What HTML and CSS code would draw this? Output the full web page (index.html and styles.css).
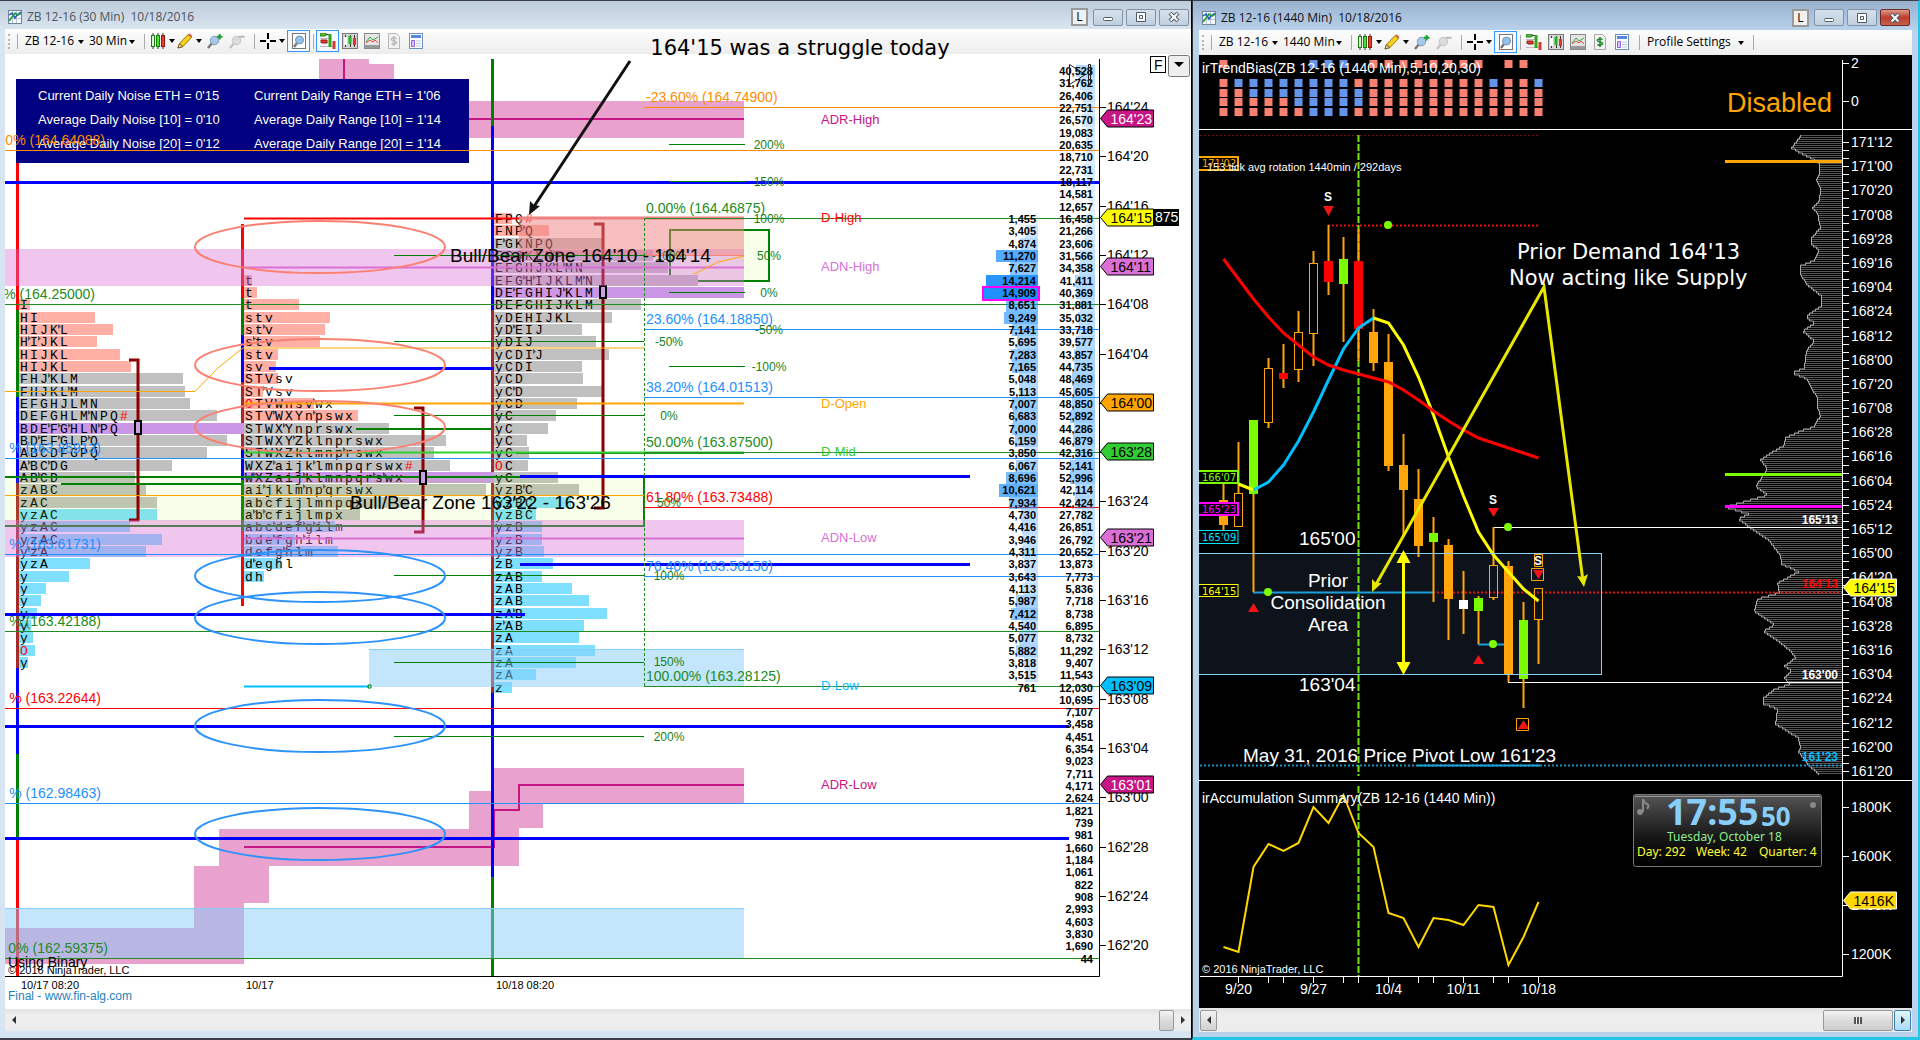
FILE: index.html
```html
<!DOCTYPE html>
<html lang="en">
<head>
  <meta charset="UTF-8">
  <meta name="viewport" content="width=device-width, initial-scale=1.0">
  <title>ZB 12-16 Charts</title>
  <link rel="stylesheet" href="styles.css">
</head>
<body>

  <!-- Shared icons -->
  <svg class="defs" width="0" height="0" aria-hidden="true">
    <symbol id="i-chart" viewBox="0 0 14 14">
      <rect x=".5" y=".5" width="13" height="13" fill="#f4f8fb" stroke="#71869a"/>
      <path d="M1 4.5h12M1 8.5h12M4.5 1v12M8.5 1v12" stroke="#b9c6d2"/>
      <path d="M1 5l3-2 3 5 2-3 4-3" fill="none" stroke="#2a53d0" stroke-width="1.5"/>
      <path d="M1 11l3-4 3-4 3 2 3-2" fill="none" stroke="#1c9d2c" stroke-width="1.5"/>
    </symbol>
    <symbol id="i-candles" viewBox="0 0 16 16">
      <path d="M3 0v16M8 0v16M13 0v16" stroke="#333"/>
      <rect x="1.5" y="2.500" width="3" height="11" fill="#d8f5cf" stroke="#1b7a12"/>
      <rect x="6.500" y="2.500" width="3" height="11" fill="#4fe02f" stroke="#1b7a12"/>
      <rect x="11.500" y="2.500" width="3" height="11" fill="#f03a2a" stroke="#8e1b12"/>
    </symbol>
    <symbol id="i-pencil" viewBox="0 0 16 16">
      <path d="M1 15l1.500-4.500L11 1.500l3.500 3L6 13.500z" fill="#f7d21c" stroke="#9b7a0a"/>
      <path d="M1 15l1.500-4.500 3.500 3z" fill="#f0d9a8" stroke="#6f5a20"/>
      <path d="M11 1.500l3.500 3 .8-1.500-2.600-2.500z" fill="#d9534a"/>
    </symbol>
    <symbol id="i-zoomin" viewBox="0 0 17 17">
      <path d="M1 16l5-6" stroke="#777" stroke-width="2.500"/>
      <circle cx="8" cy="8" r="4.500" fill="#a5c9ea" stroke="#8297ab"/>
      <path d="M13.500 1v6M10.500 4h6" stroke="#14a02c" stroke-width="2"/>
    </symbol>
    <symbol id="i-zoomout" viewBox="0 0 17 17">
      <path d="M1 16l5-6" stroke="#c3c3c3" stroke-width="2.500"/>
      <circle cx="8" cy="8" r="4.500" fill="#dcdcdc" stroke="#c0c0c0"/>
      <path d="M10.500 4h6" stroke="#b5b5b5" stroke-width="2"/>
    </symbol>
    <symbol id="i-cross" viewBox="0 0 16 16">
      <path d="M8 0v6M8 10v6M0 8h6M10 8h6" stroke="#000" stroke-width="2"/>
    </symbol>
    <symbol id="i-lens" viewBox="0 0 16 16">
      <rect x="1.500" y=".5" width="13" height="15" fill="#fff" stroke="#777"/>
      <path d="M3 14l3-4" stroke="#777" stroke-width="2.500"/>
      <circle cx="8.500" cy="7" r="4" fill="#92c1ec" stroke="#7893ab"/>
    </symbol>
    <symbol id="i-trader" viewBox="0 0 16 16">
      <path d="M0 5.500h10M0 9.500h8M0 13.500h15" stroke="#bbb"/>
      <path d="M0 0h5l2 1.500-2 1.500H0z" fill="#4fc831" stroke="#237a17"/>
      <path d="M1 7h6v3H2L1 8.500z" fill="#e8392b" stroke="#8e1b12"/>
      <path d="M6 1.500h3" stroke="#333"/>
      <path d="M10 1v13" stroke="#2da81b" stroke-width="3"/>
      <path d="M14 8v8" stroke="#d93a2c" stroke-width="3"/>
    </symbol>
    <symbol id="i-bars" viewBox="0 0 16 16">
      <rect x=".5" y=".5" width="15" height="15" fill="#d5d5d5" stroke="#777"/>
      <path d="M3.500 2v12M8.500 2v12M12.500 2v12" stroke="#333"/>
      <path d="M3.500 4v8" stroke="#fff" stroke-width="3"/>
      <path d="M8 3v8" stroke="#24b324" stroke-width="3"/>
      <path d="M12.500 5v7" stroke="#e03428" stroke-width="3"/>
    </symbol>
    <symbol id="i-lines" viewBox="0 0 16 16">
      <rect x=".5" y=".5" width="15" height="15" fill="#e4e4e4" stroke="#888"/>
      <path d="M1 12h14v3H1z" fill="#9a9a9a"/>
      <path d="M2 9l4-5 3 3 5-3" fill="none" stroke="#35a94b"/>
      <path d="M2 10l4-3 3 2 2-2 3 3" fill="none" stroke="#e0483c"/>
    </symbol>
    <symbol id="i-account" viewBox="0 0 14 16">
      <path d="M1.500.5h8l3 3v12h-11z" fill="#f2f2f2" stroke="#aaa"/>
      <path d="M9.500 5.500Q7 4 5 5.500T7 8t2 2.500-4.500 0M7 3v10" fill="none" stroke="currentColor" stroke-width="1.500"/>
    </symbol>
    <symbol id="i-panel" viewBox="0 0 14 16">
      <rect x=".5" y=".5" width="13" height="15" fill="#fff" stroke="#6f8fbd"/>
      <path d="M2 2h10v3H2z" fill="#4f8ae0"/>
      <path d="M2.500 7.500h3v6h-3z" fill="#d9c8ff" stroke="#8d5ce0"/>
      <path d="M7 8h5M7 10.500h5M7 13h5" stroke="#b9c9de"/>
    </symbol>
    <symbol id="i-min" viewBox="0 0 12 10"><rect x="1.500" y="5.500" width="9" height="3" rx="1" fill="#fff" stroke="#4f5a68"/></symbol>
    <symbol id="i-max" viewBox="0 0 12 10"><path d="M1.500.5h9v9h-9z" fill="#fff" stroke="#4f5a68"/><path d="M4.500 3.500h3v3h-3z" fill="none" stroke="#4f5a68"/></symbol>
    <symbol id="i-close" viewBox="0 0 12 10"><path d="M2 1l8 8M10 1l-8 8" stroke="#4f5a68" stroke-width="4"/><path d="M2.500 1.500l7 7M9.500 1.500l-7 7" stroke="#fff" stroke-width="2"/></symbol>
  </svg>

  <main class="desk">

    <!-- 30 minute market profile -->
    <section class="window profile">
      <header class="titlebar">
        <svg class="app-icon"><use href="#i-chart"/></svg>
        <h1>ZB 12-16 (30 Min)&nbsp; 10/18/2016</h1>
        <button class="link-btn">L</button>
        <button class="win-btn" aria-label="Minimize"><svg><use href="#i-min"/></svg></button>
        <button class="win-btn" aria-label="Restore"><svg><use href="#i-max"/></svg></button>
        <button class="win-btn" aria-label="Close"><svg><use href="#i-close"/></svg></button>
      </header>
      <nav class="toolbar">
        <span class="grip"></span><span class="sep"></span>
        <span class="combo symbol"><select aria-label="Instrument"><option>ZB 12-16</option></select></span>
        <span class="combo interval"><select aria-label="Interval"><option>30 Min</option></select></span>
        <span class="sep"></span>
        <button class="tool split" aria-label="Chart style"><svg><use href="#i-candles"/></svg></button>
        <button class="tool split" aria-label="Draw"><svg><use href="#i-pencil"/></svg></button>
        <button class="tool" aria-label="Zoom in"><svg><use href="#i-zoomin"/></svg></button>
        <button class="tool" aria-label="Zoom out"><svg><use href="#i-zoomout"/></svg></button>
        <span class="sep"></span>
        <button class="tool split" aria-label="Crosshair"><svg><use href="#i-cross"/></svg></button>
        <button class="tool on" aria-label="Data box"><svg><use href="#i-lens"/></svg></button>
        <span class="sep tight"></span>
        <button class="tool on" aria-label="Chart trader"><svg><use href="#i-trader"/></svg></button>
        <button class="tool" aria-label="Data series"><svg><use href="#i-bars"/></svg></button>
        <button class="tool" aria-label="Indicators"><svg><use href="#i-lines"/></svg></button>
        <button class="tool off" aria-label="Strategies"><svg><use href="#i-account"/></svg></button>
        <button class="tool" aria-label="Properties"><svg><use href="#i-panel"/></svg></button>
      </nav>
      <p class="annotation">164'15 was a struggle today</p>

      <svg class="chart" viewBox="5 54 1186 955" preserveAspectRatio="xMinYMin meet">
        <!-- average daily range bands -->
        <g class="adr">
          <path d="M319 59h50v5h25v74h-50v-37h-25z"/>
          <path d="M394 101h350v37H394z"/>
          <path d="M5 928H194V866H219V829H469V791H494V768H744V804H543V828H519V866H269V903H244V964H5z"/>
        </g>
        <path class="adr-line" d="M344 59v60h400M244 847H494V810H519V785H744"/>
        <g id="session-lines"></g>

        <rect x="16" y="79" width="453" height="84" fill="#000080"/>
        <g class="info">
          <text x="38" y="100">Current Daily Noise ETH = 0'15</text>
          <text x="38" y="124">Average Daily Noise [10] = 0'10</text>
          <text x="38" y="148">Average Daily Noise [20] = 0'12</text>
          <text x="254" y="100">Current Daily Range ETH = 1'06</text>
          <text x="254" y="124">Average Daily Range [10] = 1'14</text>
          <text x="254" y="148">Average Daily Range [20] = 1'14</text>
        </g>

        <path class="zone" d="M670 230H769V281H670z"/>
        <g id="profiles"></g>
        <path class="zone" d="M0 477H644V526H0z"/>

        <g class="bracket">
          <path d="M129 360h9v160h-9M414 408h9v124h-9M594 224h9v284h-9"/>
          <path class="poc" d="M135 421h6v13h-6zM420 471h6v13h-6zM600 286h6v12h-6z"/>
        </g>

        <!-- noise, supply and demand bands -->
        <path d="M5 249H744V286H5zM5 520H744V557H5z" fill="#da70d6" fill-opacity=".4"/>
        <path d="M519 217H744V255H519z" fill="#f08080" fill-opacity=".5"/>
        <path d="M519 218H744" stroke="#f08080" stroke-width="3"/>
        <path d="M369 649H744V687H369zM5 908H744V958H5z" fill="#87cefa" fill-opacity=".5"/>
        <path d="M369 649.500H744M5 908.500H744" stroke="#87cefa"/>

        <g id="levels"></g>
        <path d="M5 391.500H195L219 367 243 348H644M694 274L718 262 744 256" fill="none" stroke="#ffa500"/>
        <path d="M644.500 218V686" stroke="#228b22" stroke-dasharray="3 2"/>
        <path d="M368 685h3v3h-3z" fill="none" stroke="#008000"/>

        <g fill="none" stroke="#fa8072" stroke-width="2">
          <ellipse cx="320" cy="247" rx="125" ry="26"/>
          <ellipse cx="320" cy="365" rx="125" ry="26"/>
          <ellipse cx="320" cy="427" rx="125" ry="26"/>
        </g>
        <g fill="none" stroke="#2d93fb" stroke-width="2">
          <ellipse cx="320" cy="576" rx="125" ry="26"/>
          <ellipse cx="320" cy="618" rx="125" ry="26"/>
          <ellipse cx="320" cy="726" rx="125" ry="26"/>
          <ellipse cx="320" cy="834" rx="125" ry="26"/>
        </g>

        <g id="volume"></g>
        <g id="labels"></g>

        <text class="zone-name" x="450" y="262">Bull/Bear Zone 164'10 - 164'14</text>
        <text class="zone-name" x="350" y="509">Bull/Bear Zone 163'22 - 163'26</text>
        <path d="M630 61L531 211" stroke="#111" stroke-width="3"/>
        <path d="M529 215l1-14 4 4 6 1z" fill="#111"/>

        <path d="M1069.500 64.500v20l16-10zM1088.500 64.500v20h2v-20z" fill="none" stroke="#222"/>
        <path class="axis" d="M1099.500 59V976.500H5"/>
        <g id="price-axis"></g>

        <text class="t14" x="8" y="967">Using Binary</text>
        <text class="t11" x="8" y="974">© 2016 NinjaTrader, LLC</text>
        <text class="t11" x="21" y="989">10/17 08:20</text>
        <text class="t11" x="246" y="989">10/17</text>
        <text class="t11" x="496" y="989">10/18 08:20</text>
        <text class="t12" x="8" y="1000" fill="#1e82be">Final - www.fin-alg.com</text>

        <rect x="1150.500" y="56.500" width="15" height="16" fill="#fff" stroke="#000"/>
        <text class="t14" x="1154" y="70">F</text>
        <rect x="1168.500" y="55.500" width="21" height="21" rx="2" fill="#eee" stroke="#777"/>
        <path d="M1174 62h10l-5 5z"/>
      </svg>

      <div class="scrollbar">
        <button class="arrow prev" aria-label="Scroll left"></button>
        <span class="thumb"></span>
        <button class="arrow next" aria-label="Scroll right"></button>
      </div>
    </section>

    <!-- Daily chart -->
    <section class="window daily">
      <header class="titlebar">
        <svg class="app-icon"><use href="#i-chart"/></svg>
        <h1>ZB 12-16 (1440 Min)&nbsp; 10/18/2016</h1>
        <button class="link-btn">L</button>
        <button class="win-btn" aria-label="Minimize"><svg><use href="#i-min"/></svg></button>
        <button class="win-btn" aria-label="Restore"><svg><use href="#i-max"/></svg></button>
        <button class="win-btn close" aria-label="Close"><svg><use href="#i-close"/></svg></button>
      </header>
      <nav class="toolbar">
        <span class="grip"></span><span class="sep"></span>
        <span class="combo symbol"><select aria-label="Instrument"><option>ZB 12-16</option></select></span>
        <span class="combo interval"><select aria-label="Interval"><option>1440 Min</option></select></span>
        <span class="sep"></span>
        <button class="tool split" aria-label="Chart style"><svg><use href="#i-candles"/></svg></button>
        <button class="tool split" aria-label="Draw"><svg><use href="#i-pencil"/></svg></button>
        <button class="tool" aria-label="Zoom in"><svg><use href="#i-zoomin"/></svg></button>
        <button class="tool" aria-label="Zoom out"><svg><use href="#i-zoomout"/></svg></button>
        <span class="sep"></span>
        <button class="tool split" aria-label="Crosshair"><svg><use href="#i-cross"/></svg></button>
        <button class="tool on" aria-label="Data box"><svg><use href="#i-lens"/></svg></button>
        <span class="sep tight"></span>
        <button class="tool" aria-label="Chart trader"><svg><use href="#i-trader"/></svg></button>
        <button class="tool" aria-label="Data series"><svg><use href="#i-bars"/></svg></button>
        <button class="tool" aria-label="Indicators"><svg><use href="#i-lines"/></svg></button>
        <button class="tool" aria-label="Strategies"><svg><use href="#i-account"/></svg></button>
        <button class="tool" aria-label="Properties"><svg><use href="#i-panel"/></svg></button>
        <span class="sep"></span>
        <span class="combo settings"><select aria-label="Profile settings"><option>Profile Settings</option></select></span>
        <span class="sep"></span>
      </nav>

      <svg class="chart" viewBox="1199 55 713 953" preserveAspectRatio="xMinYMin meet">
        <defs>
          <linearGradient id="clock-bg" x2="0" y2="1">
            <stop offset="0" stop-color="#555"/><stop offset=".6" stop-color="#161616"/><stop offset="1" stop-color="#000"/>
          </linearGradient>
        </defs>
        <g id="bias"></g>
        <text class="t14" x="1202" y="73">irTrendBias(ZB 12-16 (1440 Min),5,10,20,30)</text>
        <text class="disabled" x="1727" y="112">Disabled</text>

        <rect x="1196" y="553.500" width="405.500" height="121" fill="#0e131b"/>
        <g id="vprofile"></g>
        <path d="M1725 161.500H1842" stroke="#ffa500" stroke-width="3"/>
        <path d="M1725 474.500H1842" stroke="#7cfc00" stroke-width="3"/>
        <path d="M1725 506.500H1842" stroke="#f0f" stroke-width="3"/>

        <path d="M1200 135.500H1538" stroke="#801010" stroke-dasharray="2 2"/>
        <path d="M1328 225.500H1538M1433 592.500H1842" stroke="#e01010" stroke-width="2" stroke-dasharray="2 2"/>
        <path d="M1200 765.500H1842" stroke="#1c8fc0" stroke-width="2" stroke-dasharray="2 2"/>
        <path d="M1253 592.500H1433M1478 644.500H1508M1417 765.500H1540" stroke="#1aa0dc" stroke-width="2"/>
        <path d="M1493 527.500H1842M1508 682.500H1842" stroke="#fff"/>
        <path d="M1358.500 135V776M1358.500 786V976" stroke="#74e80c" stroke-width="2" stroke-dasharray="7 2"/>
        <g id="candles"></g>
        <g id="averages"></g>
        <rect x="1196" y="553.500" width="405.500" height="121" fill="none" stroke="#87cefa"/>

        <g fill="#7cfc00">
          <circle cx="1388" cy="225" r="4"/><circle cx="1268" cy="592" r="4"/>
          <circle cx="1508" cy="527" r="4"/><circle cx="1493" cy="644" r="4"/>
        </g>
        <path fill="#f01418" d="M1323 206h11l-5.500 10zM1488 508h11l-5.500 9zM1533 570h11l-5.500 9zM1248 612h11l-5.500-9zM1473 664h11l-5.500-9zM1518 729h11l-5.500-9z"/>
        <path fill="none" stroke="#ffa500" d="M1531.500 568.500h12v12h-12zM1534.500 554.500h8v12h-8zM1516.500 718.500h12v12h-12z"/>
        <g class="signal">
          <text x="1328" y="201">S</text><text x="1493" y="504">S</text><text x="1538" y="565">S</text>
        </g>

        <g fill="none" stroke="#e6e600" stroke-width="3">
          <path d="M1374 588L1544 287l39 294"/>
          <path d="M1403.500 556V670" stroke="#ff0" />
        </g>
        <path d="M1372 592l0-13 4 4 6 0zM1584 587l-7-11 6 1 5-3z" fill="#e6e600"/>
        <path d="M1403.500 550l7 13h-14zM1403.500 675l7-13h-14z" fill="#ff0"/>

        <g class="remark">
          <text x="1299" y="545">165'00</text>
          <text x="1299" y="691">163'04</text>
          <text class="mid" x="1328" y="587">Prior</text>
          <text class="mid" x="1328" y="609">Consolidation</text>
          <text class="mid" x="1328" y="631">Area</text>
          <text x="1243" y="762">May 31, 2016 Price Pivot Low 161'23</text>
        </g>
        <text class="note" x="1517" y="259">Prior Demand 164'13</text>
        <text class="note" x="1509" y="285">Now acting like Supply</text>
        <g id="marks"></g>
        <text class="t11" x="1207" y="171">153 tick avg rotation 1440min / 292days</text>

        <path class="axis" d="M1199 129.500H1912M1199 780.500H1912M1842.500 60V976.500H1200"/>
        <g id="daily-axis"></g>
        <text class="t14" x="1202" y="803">irAccumulation Summary(ZB 12-16 (1440 Min))</text>
        <text class="t11" x="1202" y="973">© 2016 NinjaTrader, LLC</text>

        <!-- clock -->
        <rect x="1633.500" y="794.500" width="188" height="72" rx="2" fill="url(#clock-bg)" stroke="#777"/>
        <path d="M1635 796.500h185" stroke="#999"/>
        <ellipse cx="1640" cy="812" rx="3" ry="3" fill="#888"/>
        <path d="M1643 812V799q1 4 4 5t0 5" fill="none" stroke="#888" stroke-width="2"/>
        <circle cx="1813" cy="805" r="3" fill="#888"/>
        <g class="clock">
          <text class="hm" x="1666" y="825">17:55</text>
          <text class="ss" x="1761" y="826">50</text>
          <text class="date" x="1667" y="841">Tuesday, October 18</text>
          <text x="1637" y="856">Day: 292</text>
          <text x="1696" y="856">Week: 42</text>
          <text x="1759" y="856">Quarter: 4</text>
        </g>
      </svg>

      <div class="scrollbar">
        <button class="arrow prev" aria-label="Scroll left"></button>
        <span class="thumb"></span>
        <button class="arrow next" aria-label="Scroll right"></button>
      </div>
    </section>
  </main>

  <script src="charts.js"></script>
</body>
</html>
```
FILE: styles.css
```css
* {
  box-sizing: border-box;
}

body {
  margin: 0;
  background: #3b3f4a;
  font-family: "Open Sans", "Noto Sans", sans-serif;
  font-size: 12px;
}

.defs {
  position: absolute;
}

.desk {
  display: grid;
  grid-template-columns: 1192fr 728fr;
  grid-template-rows: 100%;
  height: 100vh;
  overflow: hidden;
}

/* Windows */
.window {
  position: relative;
  display: flex;
  flex-direction: column;
  min-width: 0;
  min-height: 0;
  border-top: 1px solid #3b3f4a;
}

.profile {
  padding-left: 5px;
  padding-bottom: 7px;
  background: #d7e4f2;
  border-right: 1px solid #000;
  border-bottom: 2px solid #3b3f4a;
}

.daily {
  padding: 0 6px 5px 6px;
  background: #b9d1ea;
  border-left: 1px solid #333;
  border-right: 2px solid #25c5e8;
  border-bottom: 3px solid #25c5e8;
}

.titlebar {
  display: flex;
  align-items: center;
  flex: none;
  height: 28px;
  gap: 3px;
  padding: 4px 2px 0 8px;
  margin-left: -5px;
  background: linear-gradient(#becbd8, #d9e5f1);
  color: #4a5560;
}

.daily .titlebar {
  height: 29px;
  margin: 0 -6px;
  padding-right: 8px;
  padding-left: 9px;
  background: linear-gradient(#98b2cf, #b9d1ea);
  color: #111;
}

.titlebar h1 {
  flex: 1;
  margin: 0 0 0 2px;
  font-size: 12px;
  line-height: 18px;
  font-weight: normal;
}

.app-icon {
  width: 14px;
  height: 14px;
}

.link-btn {
  width: 17px;
  height: 18px;
  margin-right: 2px;
  padding: 0;
  border: 2px solid #999;
  background: #f1f1f1;
  font: 12px/12px "Open Sans", sans-serif;
}

.win-btn {
  display: flex;
  align-items: center;
  justify-content: center;
  width: 30px;
  height: 17px;
  padding: 0;
  border: 1px solid #8292a5;
  border-radius: 2px;
  background: linear-gradient(#d5e0eb, #c0cfdf);
}

.win-btn svg {
  width: 12px;
  height: 10px;
}

.win-btn.close {
  background: linear-gradient(#dd9a8d, #bc3d2a 50%, #c5604d);
  border-color: #6b2a24;
}

/* Toolbar */
.toolbar {
  display: flex;
  align-items: center;
  flex: none;
  height: 25px;
  padding-bottom: 1px;
  background: linear-gradient(#fdfdfd, #ededed);
}

.grip {
  width: 3px;
  height: 15px;
  margin-left: 3px;
  border-left: 2px dotted #b5b5b5;
}

.sep {
  width: 1px;
  height: 15px;
  margin: 0 5px 0 6px;
  background: #aaa;
}

.sep.tight {
  margin: 0 2px 0 3px;
}

.combo {
  position: relative;
}

.combo::after {
  content: "";
  position: absolute;
  right: 3px;
  top: 8px;
  border: 3px solid transparent;
  border-top: 4px solid #000;
  border-bottom: 0;
}

.combo select {
  width: 100%;
  padding: 0 0 0 2px;
  border: 0;
  appearance: none;
  background: none;
  font: 12px/18px "Open Sans", sans-serif;
  color: #000;
}

.symbol {
  width: 64px;
}

.interval {
  width: 51px;
}

.daily .interval {
  width: 64px;
}

.settings {
  width: 102px;
}

.tool {
  display: flex;
  align-items: center;
  justify-content: center;
  width: 22px;
  height: 22px;
  padding: 0;
  border: 0;
  background: none;
  color: #1c8a2a;
}

.tool svg {
  width: 16px;
  height: 16px;
}

.tool.split {
  width: 27px;
  justify-content: flex-start;
  gap: 3px;
}

.tool.split::after {
  content: "";
  border: 3px solid transparent;
  border-top: 4px solid #000;
  border-bottom: 0;
}

.tool.on {
  width: 23px;
  border: 1px solid #3399ff;
  background: #f5f9fd;
}

.tool.off {
  color: #aaa;
  opacity: .8;
}

/* Charts */
.chart {
  flex: 1;
  width: 100%;
  min-height: 0;
  background: #fff;
  font-family: "Liberation Sans", Arial, sans-serif;
}

.daily .chart {
  background: #000;
  fill: #fff;
}

.axis {
  fill: none;
  stroke: #000;
}

.daily .axis {
  stroke: #fff;
}

.t11 { font-size: 11px; }
.t12 { font-size: 12px; }
.t13 { font-size: 13px; }
.t14 { font-size: 14px; }

.end { text-anchor: end; }
.mid { text-anchor: middle; }

.adr {
  fill: #c71585;
  fill-opacity: .4;
}

.adr-line {
  fill: none;
  stroke: #c71585;
  stroke-width: 2;
}

.info {
  fill: #fffff0;
  font-size: 13px;
}

.zone {
  fill: #adff2f;
  fill-opacity: .1;
  stroke: #008000;
  stroke-width: 2;
}

.bracket {
  fill: none;
  stroke: #8b0000;
  stroke-width: 3;
}

.bracket .poc {
  stroke: #000;
  stroke-width: 2;
  fill: #c9a0e0;
}

.tpo {
  font: 13px "Liberation Mono", "Courier New", monospace;
}

.tpo .red {
  fill: #f00;
}

.zone-name,
.remark {
  font-size: 19px;
}

.note,
.annotation {
  font: 21px/26px "DejaVu Sans", sans-serif;
}

/* callout pinned over the toolbar edge */
.annotation {
  position: absolute;
  left: 54.6%;
  top: 34px;
  margin: 0;
  white-space: nowrap;
}

.vol {
  font-size: 11px;
  font-weight: bold;
  text-anchor: end;
}

.disabled {
  font-size: 27px;
  fill: #ffa500;
}

.signal {
  font-size: 12px;
  font-weight: bold;
  text-anchor: middle;
}

.mark {
  font: 11px "DejaVu Sans Condensed", sans-serif;
}

.level {
  font-size: 12px;
  font-weight: bold;
  text-anchor: end;
}

.clock {
  font: 12px "Noto Sans", sans-serif;
  fill: #ffff33;
}

.clock .hm,
.clock .ss {
  font-weight: bold;
  fill: #87cefa;
}

.clock .hm { font-size: 36px; }
.clock .ss { font-size: 26px; }
.clock .date { fill: #90ee90; }

/* Scrollbars */
.scrollbar {
  display: flex;
  align-items: center;
  flex: none;
  height: 22px;
  background: linear-gradient(#e3e3e3, #eee 30%, #ececec);
}

.scrollbar .arrow {
  display: flex;
  align-items: center;
  justify-content: center;
  width: 17px;
  height: 21px;
  padding: 0;
  border: 0;
  background: none;
}

.arrow::before {
  content: "";
  border: 4px solid transparent;
}

.prev::before {
  border-right-color: #333;
  border-left: 0;
}

.next::before {
  border-left-color: #333;
  border-right: 0;
}

.thumb {
  width: 15px;
  height: 21px;
  margin-left: auto;
  border: 1px solid #999;
  border-radius: 2px;
  background: linear-gradient(#f3f3f3, #dcdcdc 50%, #cdcdcd);
}

.daily .scrollbar {
  height: 24px;
  padding: 0 1px;
}

.daily .arrow {
  border: 1px solid #999;
  border-radius: 2px;
  background: linear-gradient(#f3f3f3, #d0d0d0);
}

.daily .next {
  border-color: #3c7fb1;
  background: linear-gradient(#e5f4fc, #a9dbf5);
}

.daily .thumb {
  display: flex;
  align-items: center;
  justify-content: center;
  width: 70px;
  margin-right: 1px;
}

.daily .thumb::before {
  content: "";
  width: 8px;
  height: 7px;
  background: repeating-linear-gradient(90deg, #555 0 2px, #eee 2px 3px);
}
```
FILE: charts.js
```js
const byId = id => document.getElementById(id);
const fill = (id, parts) => { byId(id).innerHTML = parts.join(''); };
const esc = s => String(s).replace(/&/g, '&amp;').replace(/</g, '&lt;');
const text = (x, y, s, cls, color) =>
  `<text x="${x}" y="${y}" class="${cls}"${color ? ` fill="${color}"` : ''}>${esc(s)}</text>`;
const hline = (x1, x2, y, color, w = 1) =>
  `<path d="M${x1} ${y}H${x2}" stroke="${color}" stroke-width="${w}"/>`;
const vline = (x, y1, y2, color, w = 1) =>
  `<path d="M${x} ${y1}V${y2}" stroke="${color}" stroke-width="${w}"/>`;

/* ---------- 30 minute market profile ---------- */

// one row per tick, the first one is 164'27
const rowY = i => Math.round(71 + i * 12.33);

const SALMON = '#ffafa3', GRAY = '#c0c0c0', CYAN = '#7fdfff', PURPLE = '#cc96e6';

// [letters, right edge of the volume bar]; ' puts a time marker after a letter
const profiles = [
  { x: 19, first: 19, gray: 25, cyan: 36, poc: 29, rows: [
    ['I', 30], ['HI', 95], ["HIJK'L", 113], ["H'I'JKL", 97], ['HIJKL', 120], ['HIJKL', 131],
    ["FHJ'KLM", 183], ["FHJKL'M", 185], ['EFGHJLMN', 190], ["DEFGHLM'NPQ#", 217],
    ["BDE'F'G'HLN'PQ", 269], ["BD'EF'GLP'Q", 227], ['ABCDFGPQ', 207], ["A'BC'DG", 172],
    ["AB'CD", 135], ['zABC', 146], ['zAC', 157], ['yzAC', 157], ['yzAC', 130], ['yzAC', 162],
    ["y'z'A", 146], ['yzA', 90], ['y', 69], ['y', 46], ['y', 41], ['y', 37], ['y', 31],
    ['y', 33], ['O', 35], ['y', 28] ] },
  { x: 244, first: 17, gray: 29, cyan: 37, poc: 33, rows: [
    ['t', 252], ['t', 257], ['t', 299], ['stv', 330], ["st'v", 325], ["s'tv", 320], ['stv', 278],
    ['sv', 276], ['STVsv', 278], ["ST'Vsv", 263], ["OTVWnsv'wx", 314], ["STV'WXYn'pswx", 358],
    ["STWX'Ynprswx", 389], ["STWXY'Zklnprswx", 446], ["STWXZklmnp'rswx", 434],
    ["WXZ'aijk'lmnpqrswx#", 450], ["W'XZaij'klmnpqr's'wx", 558], ["ai'jklm'np'qrswx", 486],
    ['abcfijlmnpqx', 409], ["a'b'cfijlmpx", 360], ["abc'def'g'ilm", 335], ["bde'fgh'ilm", 295],
    ["defg'hlm", 338], ["d'eghl", 281], ['dh', 264] ] },
  { x: 494, first: 12, gray: 14, cyan: 35, poc: 18, rows: [
    ['FPQ#', 512], ["FNP'Q", 549], ["F'GKNPQ", 602], ["EGJKLN'P", 653], ["EFGHJK'L'MN", 668],
    ["EFG'H'IJKLM'N", 698], ["DE'FGHIJ'KLM", 744], ['DEFGHIJKLM', 641], ['yDEHIJKL', 612],
    ["yD'EIJ", 582], ['yDIJ', 596], ["yCDI'J", 609], ['yCDI', 582], ['yCD', 583], ["yC'D", 602],
    ['yCD', 577], ['yC', 556], ['yC', 548], ['yC', 527], ['yC', 529], ['OC', 528], ['yC', 558],
    ["yzB'C", 579], ["yz'BC", 571], ['yzBC', 536], ['yzB', 542], ['yzB', 542], ['yzB', 544],
    ['zB', 553], ['zAB', 542], ['zAB', 572], ['zAB', 589], ["zA'B", 607], ["z'AB", 584],
    ['zA', 579], ['zA', 595], ['zA', 576], ['zA', 536], ['z', 512] ] }
];

const bars = [], letters = [];
profiles.forEach(p => p.rows.forEach(([s, right], n) => {
  const i = p.first + n, y = rowY(i);
  const color = i === p.poc ? PURPLE : i >= p.cyan ? CYAN : i >= p.gray ? GRAY : SALMON;
  bars.push(`<rect x="${p.x}" y="${y - 6}" width="${right - p.x}" height="11" fill="${color}"/>`);
  let x = p.x + 1, row = '';
  for (const ch of s) {
    if (ch === "'") {
      letters.push(`<path d="M${x - 2} ${y - 6}l3 2.500-3 2.500z" fill="#555"/>`);
      continue;
    }
    row += `<tspan x="${x}"${ch === '#' || ch === 'O' ? ' class="red"' : ''}>${ch}</tspan>`;
    x += 10;
  }
  letters.push(`<text class="tpo" y="${y + 4}">${row}</text>`);
}));
fill('profiles', bars.concat(letters));

// session start lines, coloured by area
const sessions = [
  [17.5, [163, 'red', 310, 'green', 397, 'blue', 483, 'brown', 668, 'blue', 754, 'green', 839, 'red', 976]],
  [242.5, [224, 'red', 298, 'green', 335, 'blue', 382, 'brown', 450, 'blue', 480, 'green', 531, 'red', 606]],
  [492.5, [59, 'green', 126, 'blue', 310, 'brown', 693, 'blue', 877, 'green', 976]]
];
const sess = [];
sessions.forEach(([x, s]) => {
  for (let n = 0; n < s.length - 1; n += 2) sess.push(vline(x, s[n], s[n + 2], s[n + 1], 3));
});
fill('session-lines', sess);

const GREEN = '#228b22', BLUE = '#1e90ff', ORANGE = '#ff8c00';
const levels = [
  [5, 1099, 182.5, 'blue', 3], [269, 494, 368.5, 'blue', 3], [520, 970, 476.5, 'blue', 3],
  [520, 970, 564.5, 'blue', 3], [5, 525, 614.5, 'blue', 3], [5, 1069, 726.5, 'blue', 3],
  [5, 1069, 838.5, 'blue', 3],
  [61, 242, 484, 'green', 2], [356, 491, 429, 'green', 2], [516, 744, 453, 'green', 2],
  [244, 744, 403.5, '#ffa500', 2], [244, 744, 452.5, '#32cd32', 2],
  [244, 744, 267.5, '#da70d6', 2], [244, 744, 538.5, '#da70d6', 2],
  [244, 519, 218.5, 'red', 2], [244, 369, 686.5, '#00bfff', 2],
  [644, 1099, 107.5, ORANGE], [5, 1099, 150.5, ORANGE], [5, 644, 495.5, '#ffa500'],
  [644, 1099, 218.5, GREEN], [5, 1099, 304.5, GREEN], [644, 1099, 452.5, GREEN],
  [5, 1099, 631.5, GREEN], [644, 1099, 686.5, GREEN], [5, 1099, 958.5, GREEN],
  [644, 1099, 329.5, BLUE], [644, 1099, 397.5, BLUE], [5, 1099, 458.5, BLUE],
  [5, 1099, 554.5, BLUE], [644, 1099, 576.5, BLUE], [5, 1099, 803.5, BLUE],
  [644, 1099, 507.5, 'red'], [5, 1099, 708.5, 'red'],
  [519, 744, 255.5, '#fa8072']
];
[255.5, 341.5, 415.5, 575.5, 662.5, 736.5].forEach(y => levels.push([394, 644, y, 'green']));
[144.5, 181.5, 292.5, 366.5].forEach(y => levels.push([669, 745, y, 'green']));
fill('levels', levels.map(l => hline(...l)));

const labels = [
  [646, 102, '-23.60% (164.74900)', ORANGE], [646, 213, '0.00% (164.46875)', GREEN],
  [646, 324, '23.60% (164.18850)', BLUE], [646, 392, '38.20% (164.01513)', BLUE],
  [646, 447, '50.00% (163.87500)', GREEN], [646, 502, '61.80% (163.73488)', 'red'],
  [646, 571, '76.40% (163.56150)', BLUE], [646, 681, '100.00% (163.28125)', GREEN]
].map(([x, y, s, c]) => text(x, y, s, 't14', c));
[
  [105, 145, '0% (164.64088)', ORANGE], [95, 299, '% (164.25000)', GREEN],
  [101, 453, '% (163.85913)', BLUE], [101, 549, '% (163.61731)', BLUE],
  [101, 626, '% (163.42188)', GREEN], [101, 703, '% (163.22644)', 'red'],
  [101, 798, '% (162.98463)', BLUE], [108, 953, '0% (162.59375)', GREEN]
].forEach(([x, y, s, c]) => labels.push(text(x, y, s, 't14 end', c)));
[
  [124, 'ADR-High', '#c71585'], [222, 'D-High', 'red'], [271, 'ADN-High', '#da70d6'],
  [408, 'D-Open', '#ffa500'], [456, 'D-Mid', '#32cd32'], [542, 'ADN-Low', '#da70d6'],
  [690, 'D-Low', '#00bfff'], [789, 'ADR-Low', '#c71585']
].forEach(([y, s, c]) => labels.push(text(821, y, s, 't13', c)));
[
  [669, 260, '-100%'], [669, 346, '-50%'], [669, 420, '0%'], [669, 507, '50%'],
  [669, 580, '100%'], [669, 666, '150%'], [669, 741, '200%'],
  [769, 149, '200%'], [769, 186, '150%'], [769, 223, '100%'], [769, 260, '50%'],
  [769, 297, '0%'], [769, 334, '-50%'], [769, 371, '-100%']
].forEach(([x, y, s]) => labels.push(text(x, y, s, 't12 mid', '#1a7f1a')));
fill('labels', labels);

// composite volume and today's volume
const composite = [40528, 31762, 26406, 22751, 26570, 19083, 20635, 18710, 22731, 18117, 14581,
  12657, 16458, 21266, 23606, 31566, 34358, 41411, 40369, 31881, 35032, 33718, 39577, 43857,
  44735, 48469, 45605, 48850, 52892, 44286, 46879, 42316, 52141, 52996, 42114, 42424, 27782,
  26851, 26792, 20652, 13873, 7773, 5836, 7718, 8738, 6895, 8732, 11292, 9407, 11543, 12030,
  10695, 7107, 3458, 4451, 6354, 9023, 7711, 4171, 2624, 1821, 739, 981, 1660, 1184, 1061, 822,
  908, 2993, 4603, 3830, 1690, 44];
const today = [1455, 3405, 4874, 11270, 7627, 14214, 14909, 8651, 9249, 7141, 5695, 7283, 7165,
  5048, 5113, 7007, 6683, 7000, 6159, 3850, 6067, 8696, 10621, 7934, 4730, 4416, 3946, 4311,
  3837, 3643, 4113, 5987, 7412, 4540, 5077, 5882, 3818, 3515, 761];
const volume = [];
function volumeColumn(data, first, right, width, max, alpha) {
  data.forEach((v, n) => {
    const y = rowY(first + n), w = Math.round(v / max * width);
    const h = rowY(first + n + 1) - y;
    volume.push(`<rect x="${right - w}" y="${y - 6}" width="${w}" height="${h}" fill="#1e90ff" fill-opacity="${(v / max * alpha).toFixed(2)}"/>`);
    volume.push(text(right - 2, y + 4, v.toLocaleString('en-US'), 'vol'));
  });
}
volumeColumn(composite, 0, 1095, 25, 52996, .45);
volumeColumn(today, 12, 1038, 55, 14909, 1);
volume.push('<rect x="983" y="287" width="56" height="13" fill="none" stroke="#f0f" stroke-width="2"/>');
fill('volume', volume);

function tag(x, y, w, s, bg, fg, line) {
  return `<path d="M${x} ${y}l7-8.500h${w}v17h-${w}z" fill="${bg}" stroke="${line}"/>` +
    text(x + 10, y + 5, s, 't14', fg);
}
const axis = [];
['164\'24', '164\'20', '164\'16', '164\'12', '164\'08', '164\'04', '164\'00', '163\'28', '163\'24',
  '163\'20', '163\'16', '163\'12', '163\'08', '163\'04', '163\'00', '162\'28', '162\'24', '162\'20'
].forEach((s, k) => {
  const y = Math.round(107 + k * 49.3);
  axis.push(hline(1100, 1106, y + .5, '#000'), text(1107, y + 5, s, 't14', '#000'));
});
[
  [118.5, "164'23", '#c71585', '#fff'], [217.5, "164'15", 'yellow', '#000'],
  [266.5, "164'11", '#da70d6', '#000'], [402.5, "164'00", '#ffa500', '#000'],
  [451.5, "163'28", '#32cd32', '#000'], [537.5, "163'21", '#da70d6', '#000'],
  [685.5, "163'09", '#00bfff', '#000'], [784.5, "163'01", '#c71585', '#fff']
].forEach(([y, s, bg, fg]) => axis.push(tag(1100.5, y, 46, s, bg, fg, '#000')));
axis.push('<rect x="1154" y="209" width="25" height="17" fill="#000"/>', text(1155, 222, '875', 't14', '#fff'));
fill('price-axis', axis);

/* ---------- daily chart ---------- */

const barX = k => 1223.5 + k * 15;

// r = down, b = up, . = none
const bias = [
  [60, 'r.....bbb.rrrrrrrr.rr.'],
  [79, 'rbbbbbbbbrrrrrrrrrbrrb'],
  [89, 'rrbbbbbbbbrrrrrrrrrrrr'],
  [98, 'rrrrrbbbbbrrrrrrrrrrrr'],
  [108, 'rrrrrrbbbrrrrrrrrrrrrr']
];
const squares = [];
bias.forEach(([y, s]) => [...s].forEach((c, k) => {
  if (c !== '.') squares.push(`<rect x="${barX(k) - 4}" y="${y}" width="8" height="8" fill="${c === 'r' ? '#fa8072' : '#6495ed'}"/>`);
}));
fill('bias', squares);

// [high, low, body top, body bottom, kind]
const LIME = '#7cfc00', AMBER = '#ffa50a';
const candles = [
  [480, 530, 500, 525, AMBER], [442, 526, 493, 526, 'none'], [420, 592, 420, 494, LIME],
  [358, 428, 368, 422, 'none'], [344, 388, 373, 379, 'red'], [311, 382, 332, 369, 'none'],
  [251, 366, 263, 333, 'none'], [225, 295, 261, 282, 'red'], [237, 342, 259, 284, LIME],
  [229, 361, 261, 329, 'red'], [309, 371, 332, 363, AMBER], [334, 471, 362, 466, AMBER],
  [434, 536, 465, 490, AMBER], [469, 557, 499, 546, AMBER], [517, 602, 533, 542, LIME],
  [539, 640, 545, 599, AMBER], [571, 634, 600, 609, '#fff'], [596, 644, 598, 611, LIME],
  [527, 600, 565, 597, 'none'], [561, 682, 566, 674, AMBER], [602, 708, 620, 679, LIME],
  [588, 664, 588, 619, 'none']
];
fill('candles', candles.map(([hi, lo, top, bottom, kind], k) => {
  const x = barX(k);
  if (kind === 'none') {
    return vline(x, hi, top, AMBER, 2) + vline(x, bottom, lo, AMBER, 2) +
      `<rect x="${x - 4}" y="${top + .5}" width="8" height="${bottom - top}" fill="none" stroke="${AMBER}"/>`;
  }
  return vline(x, hi, lo, AMBER, 2) +
    `<rect x="${x - 4.5}" y="${top}" width="9" height="${bottom - top}" fill="${kind}"/>`;
}));

function curve(first, ys, color, w) {
  const pts = ys.map((y, n) => `${barX(first + n)},${y}`).join(' ');
  return `<polyline points="${pts}" fill="none" stroke="${color}" stroke-width="${w}"/>`;
}
fill('averages', [
  curve(1, [484, 490], 'yellow', 3),
  curve(2, [490, 482, 465, 441, 412, 380, 349, 328, 318], '#00bfff', 3),
  curve(10, [318, 323, 345, 377, 415, 457, 496, 532, 555, 572, 589, 601], 'yellow', 3),
  curve(0, [259, 279, 299, 317, 333, 345, 357, 365, 370, 374, 378, 382, 390, 400, 411, 421, 430,
    438, 443, 448, 453, 458], 'red', 3),
  curve(0, [947, 952, 867, 844, 851, 843, 807, 823, 795, 833, 847, 913, 918, 947, 918, 920, 925,
    905, 907, 965, 937, 902], '#ffd700', 2)
]);

// volume at price silhouette, drawn tick by tick
const shape = [[1800, 135], [1791, 147], [1800, 152], [1816, 160], [1819, 163], [1819, 173],
  [1816, 178], [1820, 187], [1819, 200], [1812, 207], [1817, 212], [1820, 227], [1811, 237],
  [1811, 243], [1819, 250], [1813, 260], [1800, 265], [1800, 274], [1807, 284], [1821, 295],
  [1821, 305], [1807, 314], [1807, 318], [1815, 322], [1802, 330], [1814, 340], [1806, 350],
  [1804, 367], [1791, 372], [1807, 378], [1811, 388], [1817, 396], [1817, 407], [1820, 415],
  [1813, 426], [1800, 430], [1785, 437], [1783, 445], [1770, 452], [1760, 459], [1767, 468],
  [1755, 486], [1767, 494], [1725, 506], [1748, 513], [1738, 518], [1750, 527], [1768, 539],
  [1780, 555], [1781, 563], [1798, 571], [1777, 582], [1779, 592], [1757, 598], [1754, 610],
  [1774, 624], [1763, 630], [1780, 642], [1789, 649], [1795, 657], [1784, 665], [1791, 670],
  [1784, 677], [1789, 683], [1773, 689], [1763, 697], [1763, 703], [1777, 708], [1775, 723],
  [1798, 737], [1800, 746], [1798, 751], [1807, 763], [1819, 774]];
let rungs = '', outline = '', seg = 0;
for (let y = 135; y <= 773; y += 2) {
  while (shape[seg + 1][1] < y) seg++;
  const [xa, ya] = shape[seg], [xb, yb] = shape[seg + 1];
  const x = Math.round(xa + (xb - xa) * (y - ya) / (yb - ya)) + .5;
  rungs += `M${x} ${y + .5}H1842`;
  outline += `${outline ? 'H' : 'M'}${x}${outline ? '' : ' ' + y}V${y + 2}`;
}
fill('vprofile', [
  `<path d="${rungs}" stroke="#555"/>`,
  `<path d="${outline}" fill="none" stroke="#aaa"/>`
]);

const marks = [];
[
  [157, 13, "171'02", '#ffa500', 2], [471, 12, "166'07", '#7cfc00', 2], [503, 12, "165'23", '#f0f', 2],
  [530.5, 13, "165'09", '#00e5ff', 1], [584.5, 12, "164'15", 'yellow', 1]
].forEach(([y, h, s, c, w]) => {
  marks.push(`<rect x="1196" y="${y}" width="42" height="${h}" fill="#000" stroke="${c}" stroke-width="${w}"/>`);
  marks.push(text(1202, Math.round(y) + 10, s, 'mark', c));
});
[[524, "165'13", '#fff'], [588, "164'13", 'red'], [679, "163'00", '#fff'], [761, "161'23", '#00bfff']]
  .forEach(([y, s, c]) => marks.push(text(1838, y, s, 'level', c)));
fill('marks', marks);

const daily = [];
for (let t = 0; t <= 26 * 3; t++) {
  const y = Math.round(142 + t * 8.0628);
  daily.push(hline(1843, 1849, y + .5, '#fff'));
  if (t % 3 === 0) {
    const p = 171 * 32 + 12 - t * 4;
    daily.push(text(1851, y + 5, `${Math.floor(p / 32)}'${String(p % 32).padStart(2, '0')}`, 't14'));
  }
}
[[63, '2'], [101, '0'], [807, '1800K'], [856, '1600K'], [905, '1400K'], [954, '1200K']]
  .forEach(([y, s]) => daily.push(hline(1843, 1849, y + .5, '#fff'), text(1851, y + 5, s, 't14')));
const dates = { 1: '9/20', 6: '9/27', 11: '10/4', 16: '10/11', 21: '10/18' };
[1, 3, 4, 6, 8, 9, 11, 13, 14, 16, 18, 19, 21].forEach(k => {
  daily.push(vline(barX(k), 977, 983, '#fff'));
  if (dates[k]) daily.push(text(barX(k), 994, dates[k], 't14 mid'));
});
daily.push(tag(1843.5, 587.5, 46, "164'15", 'yellow', '#000', '#fff'));
daily.push(tag(1843.5, 900.5, 46, '1416K', '#ffd700', '#000', '#fff'));
fill('daily-axis', daily);
```
